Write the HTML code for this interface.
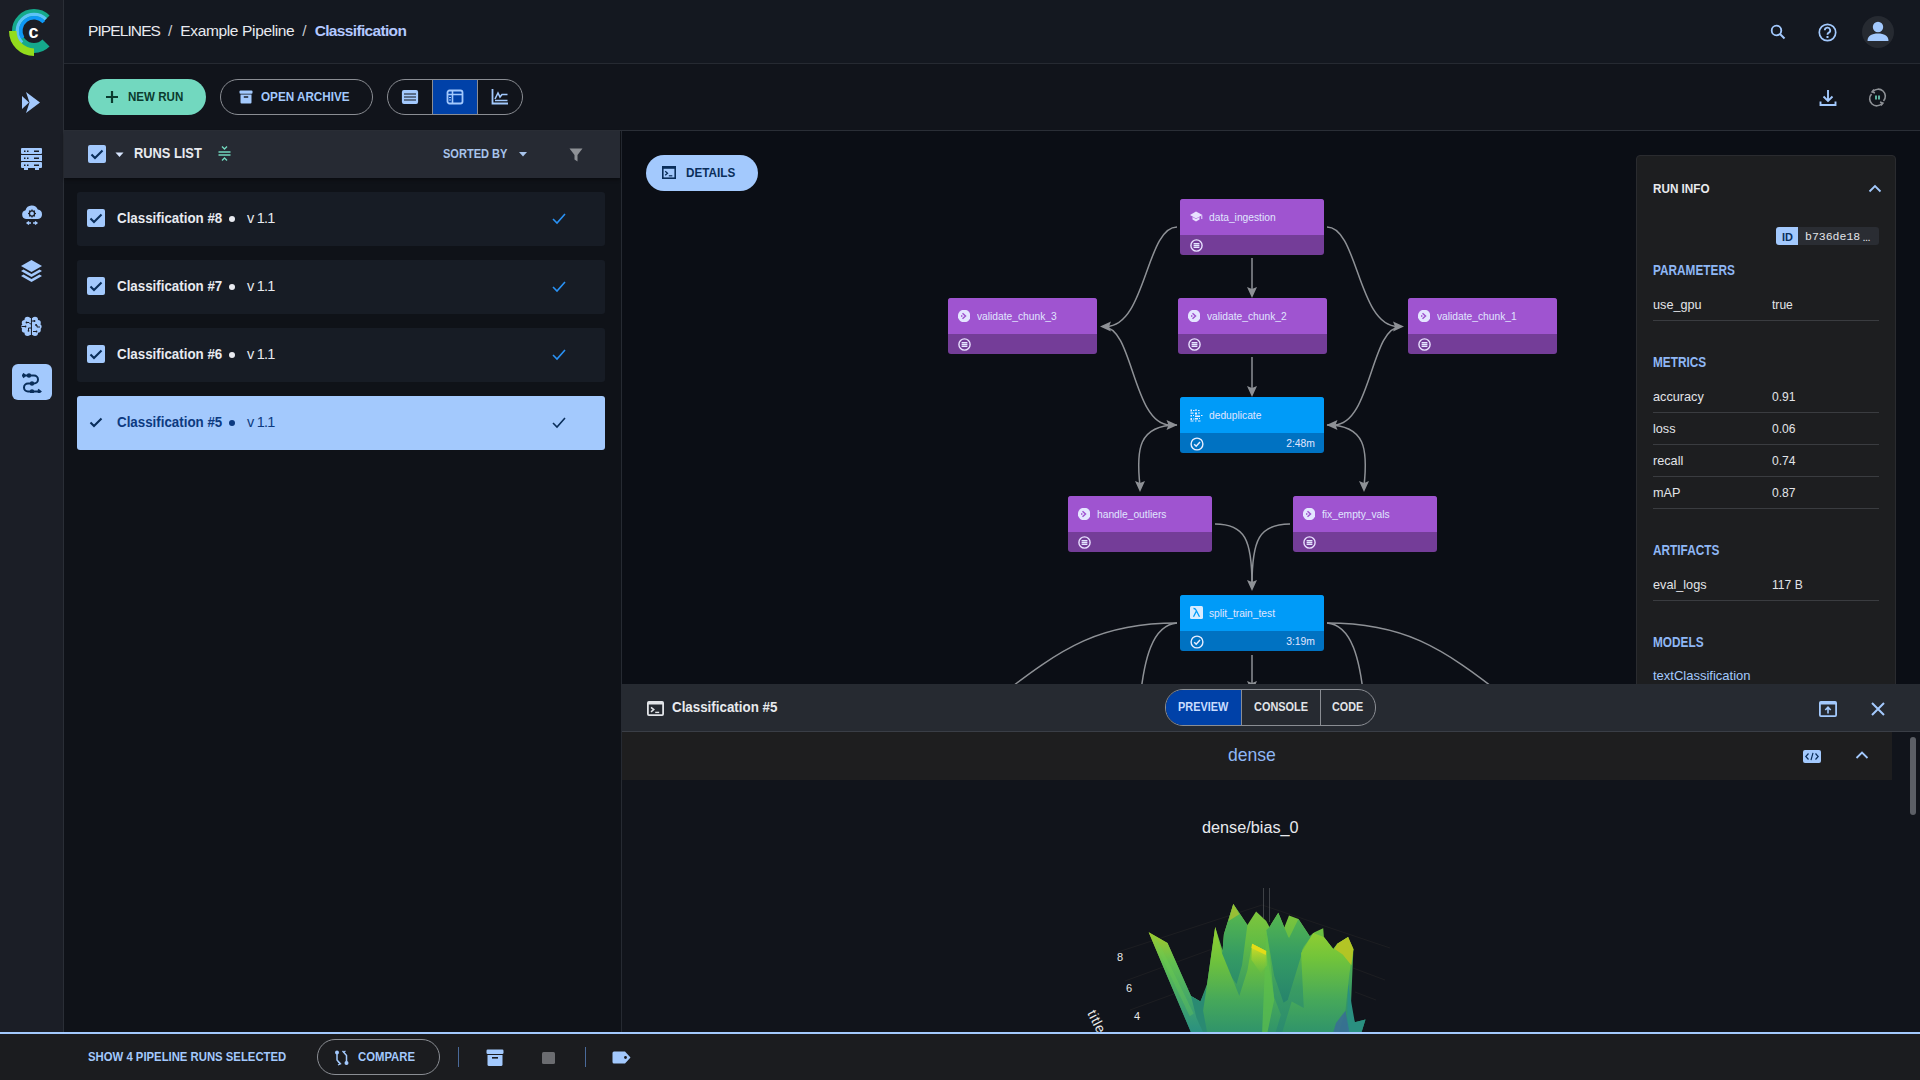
<!DOCTYPE html>
<html><head><meta charset="utf-8">
<style>
*{box-sizing:border-box;margin:0;padding:0}
html,body{width:1920px;height:1080px;overflow:hidden;background:#11141b;font-family:"Liberation Sans",sans-serif;color:#e6e8ee}
.a{position:absolute}
#sidebar{left:0;top:0;width:64px;height:1032px;background:#1b1e26;border-right:1px solid #2a2e36}
#header{left:64px;top:0;width:1856px;height:64px;background:#141820;border-bottom:1px solid #262a32}
#toolbar{left:64px;top:64px;width:1856px;height:67px;background:#11141b;border-bottom:1px solid #2a2e36}
#runs{left:64px;top:131px;width:558px;height:901px;background:#0f1218;border-right:1px solid #262a32}
#runshead{left:0;top:0;width:556px;height:47px;background:#262a33;box-shadow:0 2px 3px rgba(0,0,0,0.35)}
.card{position:absolute;left:13px;width:528px;height:54px;background:#171c25;border-radius:3px}
.card.sel{background:#a3c9fd}
#graph{left:622px;top:131px;width:1298px;height:553px;background:#0b0e15;overflow:hidden}
#bottom{left:622px;top:684px;width:1298px;height:348px;background:#11141b;overflow:hidden}
#footer{left:0;top:1032px;width:1920px;height:48px;background:#1b1c1f;border-top:2px solid #a3c9fd}
.btn{position:absolute;border-radius:18px;height:36px}
</style></head>
<body>
<div id="sidebar" class="a">
  <svg class="a" style="left:0;top:0" width="63" height="64" viewBox="0 0 63 64">
    <!-- logo --><path d="M46.02 18.98 A17 17 0 1 0 46.02 43.02" fill="none" stroke="#15a98b" stroke-width="10"/><path d="M45.77 19.23 A16.65 16.65 0 0 0 22.02 42.57" fill="none" stroke="#5cc3f5" stroke-width="3.4"/><path d="M43.85 22.13 A13.25 13.25 0 0 0 22.76 38.02" fill="none" stroke="#0e98f6" stroke-width="3.6"/><path d="M12.75 31.00 A21.25 21.25 0 0 0 34.00 52.25" fill="none" stroke="#93dc1c" stroke-width="7.5"/><text x="33.6" y="37.5" font-family="Liberation Sans" font-weight="bold" font-size="18" fill="#fff" text-anchor="middle">c</text></svg>
  <svg class="a" style="left:21px;top:91px" width="21" height="23" viewBox="0 0 21 23"><path d="M5 1 L19 11.5 L5 22 L8.5 11.5 Z" fill="#a3c9fd"/><path d="M1 5 L8 11.5 L1 18 Z" fill="#a3c9fd"/></svg>
  <svg class="a" style="left:21px;top:148px" width="21" height="22" viewBox="0 0 21 22">
    <rect x="0" y="0" width="21" height="6" rx="1" fill="#a3c9fd"/><rect x="0" y="7" width="21" height="6" fill="#a3c9fd"/><rect x="0" y="14" width="21" height="6" rx="1" fill="#a3c9fd"/><rect x="3" y="20" width="4" height="2" fill="#a3c9fd"/><rect x="14" y="20" width="4" height="2" fill="#a3c9fd"/>
    <g fill="#1b1e26"><rect x="3" y="2.5" width="1.5" height="1.5"/><rect x="6" y="2.5" width="1.5" height="1.5"/><rect x="13" y="2.5" width="5" height="1.5"/><rect x="3" y="9.5" width="1.5" height="1.5"/><rect x="6" y="9.5" width="1.5" height="1.5"/><rect x="13" y="9.5" width="5" height="1.5"/><rect x="3" y="16.5" width="1.5" height="1.5"/><rect x="6" y="16.5" width="1.5" height="1.5"/><rect x="13" y="16.5" width="5" height="1.5"/></g>
  </svg>
  <svg class="a" style="left:21px;top:204px" width="22" height="22" viewBox="0 0 22 22">
    <path d="M5 15 A4.5 4.5 0 0 1 4.5 6.2 A6.5 6.5 0 0 1 16.8 5.5 A4.8 4.8 0 0 1 17 15 Z" fill="#a3c9fd"/>
    <circle cx="11" cy="9.5" r="2.6" fill="none" stroke="#1b1e26" stroke-width="1.4"/>
    <path d="M11 5.5v1.6M11 11.9v1.6M7 9.5h1.6M13.4 9.5H15M8.2 6.7l1.1 1.1M12.7 11.2l1.1 1.1M8.2 12.3l1.1-1.1M12.7 7.8l1.1-1.1" stroke="#1b1e26" stroke-width="1.2"/>
    <path d="M6 19h4M8 17.5l-2 1.5 2 1.5M12 19h4M14 17.5l2 1.5-2 1.5" stroke="#a3c9fd" stroke-width="1.3" fill="none"/>
  </svg>
  <svg class="a" style="left:21px;top:260px" width="21" height="22" viewBox="0 0 21 22">
    <path d="M10.5 0 L21 6 L10.5 12 L0 6 Z" fill="#a3c9fd"/>
    <path d="M2.5 9.5 L0 11 L10.5 17 L21 11 L18.5 9.5 L10.5 14 Z" fill="#a3c9fd"/>
    <path d="M2.5 14.5 L0 16 L10.5 22 L21 16 L18.5 14.5 L10.5 19 Z" fill="#a3c9fd"/>
  </svg>
  <svg class="a" style="left:21px;top:316px" width="21" height="21" viewBox="0 0 21 21"><g fill="#a3c9fd">
<circle cx="6.5" cy="3.8" r="3"/><circle cx="3.6" cy="6.8" r="2.8"/><circle cx="2.8" cy="10.5" r="2.6"/><circle cx="3.6" cy="14" r="2.8"/><circle cx="6.5" cy="17" r="3"/><rect x="5" y="2" width="5" height="17"/>
<circle cx="14" cy="3.8" r="3"/><circle cx="17" cy="6.8" r="2.8"/><circle cx="18" cy="10.5" r="2.6"/><circle cx="17" cy="14" r="2.8"/><circle cx="14" cy="17" r="3"/><rect x="10.8" y="2" width="5" height="17"/></g>
<path d="M10.4 1v19" stroke="#1b1e26" stroke-width="0.8"/>
<g stroke="#1b1e26" stroke-width="1" fill="none"><path d="M0.5 10.5h3.5M5.5 6.5l2.5 0 1.5 1.5h1M7.5 14.5v-2.5h3M13 5h-2.5M15 9h1v2h3M12 15.5h3"/></g>
<g fill="#1b1e26"><circle cx="4.5" cy="10.5" r="0.9"/><circle cx="5.5" cy="6.5" r="0.9"/><circle cx="7.5" cy="14.8" r="0.9"/><circle cx="13.5" cy="5" r="0.9"/><circle cx="15" cy="9" r="0.9"/><circle cx="15.5" cy="15.5" r="0.9"/></g></svg>
  <div class="a" style="left:12px;top:364px;width:40px;height:36px;background:#a3c9fd;border-radius:6px"></div>
  <svg class="a" style="left:21px;top:373px" width="21" height="20" viewBox="0 0 21 20">
    <path d="M1 2.5 H13 A4 4 0 0 1 13 10.5 H7 A4 4 0 0 0 7 18.5 H19" fill="none" stroke="#0a2e5a" stroke-width="2"/>
    <path d="M2 0.5 L4 2.5 L2 4.5M17 16.5 L19.5 18.5 L17 20.5" fill="none" stroke="#0a2e5a" stroke-width="1.8"/>
    <circle cx="8" cy="2.5" r="2.2" fill="#0a2e5a"/><circle cx="11" cy="10.5" r="2.2" fill="#0a2e5a"/><circle cx="11" cy="18.5" r="2.2" fill="#0a2e5a"/>
  </svg>
</div>
<div id="header" class="a">
  <div class="a" style="left:24px;top:21px;font-size:15.5px;line-height:19px;white-space:nowrap;color:#e8eaf0" id="bc"><span id="bc1" style="letter-spacing:-0.9px">PIPELINES</span><span style="margin:0 8px 0 8px;color:#c8cad0">/</span><span id="bc2" style="letter-spacing:-0.36px">Example Pipeline</span><span style="margin:0 8px 0 8px;color:#c8cad0">/</span><span id="bc3" style="color:#b3c8ff;font-weight:bold;letter-spacing:-0.66px">Classification</span></div>
  <svg class="a" style="left:1706px;top:24px" width="16" height="16" viewBox="0 0 16 16"><circle cx="6.5" cy="6.5" r="4.8" fill="none" stroke="#a3c9fd" stroke-width="1.8"/><path d="M10 10 L14.5 14.5" stroke="#a3c9fd" stroke-width="2"/></svg>
  <svg class="a" style="left:1754px;top:23px" width="19" height="19" viewBox="0 0 19 19"><circle cx="9.5" cy="9.5" r="8.2" fill="none" stroke="#a3c9fd" stroke-width="1.7"/><path d="M6.8 7.3 A2.7 2.7 0 1 1 10.5 9.8 C9.6 10.3 9.5 10.8 9.5 11.8" fill="none" stroke="#a3c9fd" stroke-width="1.8"/><rect x="8.5" y="13" width="2" height="2" fill="#a3c9fd"/></svg>
  <div class="a" style="left:1798px;top:16px;width:32px;height:32px;border-radius:50%;background:#262a31"></div>
  <svg class="a" style="left:1802px;top:20px" width="24" height="24" viewBox="0 0 24 24"><circle cx="12" cy="7" r="5.2" fill="#a3c9fd"/><path d="M1.5 21 C1.5 15.5 6 13.5 12 13.5 C18 13.5 22.5 15.5 22.5 21 Z" fill="#a3c9fd"/></svg>
</div>
<div id="toolbar" class="a">
  <div class="btn" style="left:24px;top:15px;width:118px;height:36px;background:#72d8bf"></div>
  <svg class="a" style="left:41px;top:26px" width="14" height="14" viewBox="0 0 14 14"><path d="M7 1v12M1 7h12" stroke="#0b3b2e" stroke-width="2.2"/></svg>
  <div class="a" id="tb_new" style="left:64px;top:25px;font-size:13px;line-height:15px;font-weight:bold;color:#0b3b2e;transform-origin:0 50%;transform:scaleX(0.89)">NEW RUN</div>
  <div class="btn" style="left:156px;top:15px;width:153px;height:36px;border:1px solid #8a8d93"></div>
  <svg class="a" style="left:175px;top:26px" width="14" height="14" viewBox="0 0 14 14"><rect x="0.5" y="0.5" width="13" height="3.2" rx="1" fill="#a3c9fd"/><path d="M1.5 4.5h11v8a1 1 0 0 1-1 1h-9a1 1 0 0 1-1-1z" fill="#a3c9fd"/><rect x="4.8" y="6.3" width="4.4" height="1.4" fill="#11141b"/></svg>
  <div class="a" id="tb_arch" style="left:197px;top:25px;font-size:13px;line-height:15px;font-weight:bold;color:#a3c9fd;transform-origin:0 50%;transform:scaleX(0.9)">OPEN ARCHIVE</div>
  <div class="btn" style="left:323px;top:15px;width:136px;height:36px;border:1px solid #8a8d93;overflow:hidden">
    <div class="a" style="left:44px;top:0;width:46px;height:34px;background:#0041a8;border-left:1px solid #8a8d93;border-right:1px solid #8a8d93"></div>
  </div>
  <svg class="a" style="left:337px;top:25px" width="18" height="16" viewBox="0 0 18 16"><rect x="0.9" y="1" width="16.2" height="14" rx="2" fill="#a3c9fd"/><path d="M3 5h12M3 8h12M3 11h12" stroke="#11141b" stroke-width="1.2"/></svg>
  <svg class="a" style="left:382px;top:25px" width="18" height="16" viewBox="0 0 18 16"><rect x="1.5" y="1.5" width="15" height="13" rx="2" fill="none" stroke="#a3c9fd" stroke-width="1.8"/><path d="M6.5 2v12M2 5.5h15" stroke="#a3c9fd" stroke-width="1.6"/><path d="M3 8.5h2M3 11h2" stroke="#a3c9fd" stroke-width="1.2"/></svg>
  <svg class="a" style="left:427px;top:24px" width="18" height="17" viewBox="0 0 18 17"><path d="M1.5 1v14.5H17" fill="none" stroke="#a3c9fd" stroke-width="1.8"/><path d="M4 11 L7 5 L9 9 L11 6.5 L16.5 6.5" fill="none" stroke="#a3c9fd" stroke-width="1.6"/><path d="M4 12.5h12.5" stroke="#a3c9fd" stroke-width="1.5"/></svg>
  <svg class="a" style="left:1755px;top:25px" width="18" height="18" viewBox="0 0 18 18"><path d="M9 1v11M4.5 7.5 L9 12 L13.5 7.5" fill="none" stroke="#a3c9fd" stroke-width="1.9"/><path d="M1.5 12.5v3.5h15v-3.5" fill="none" stroke="#a3c9fd" stroke-width="1.9"/></svg>
  <svg class="a" style="left:1804px;top:24px;transform:scaleX(-1)" width="19" height="19" viewBox="0 0 19 19"><path d="M3.5 13 A7 7 0 0 1 14 3.5" fill="none" stroke="#8e9196" stroke-width="1.6"/><path d="M15.5 6 A7 7 0 0 1 5 15.5" fill="none" stroke="#8e9196" stroke-width="1.6"/><path d="M13 1.5 L15 4 L12 5" fill="none" stroke="#8e9196" stroke-width="1.5"/><path d="M6 17.5 L4 15 L7 14" fill="none" stroke="#8e9196" stroke-width="1.5"/><path d="M8 7.5v4M11 7.5v4" stroke="#72d8bf" stroke-width="1.6"/></svg>
</div>
<div id="runs" class="a">
  <div id="runshead" class="a">
    <div class="a" style="left:24px;top:14px;width:18px;height:18px;border-radius:2px;background:#a3c9fd"></div><svg class="a" style="left:24px;top:14px" width="18" height="18" viewBox="0 0 18 18"><path d="M3.5 9.5 L7 13 L14.5 5.5" fill="none" stroke="#0a2e5a" stroke-width="2.1"/></svg>
    <svg class="a" style="left:51px;top:21px" width="9" height="6" viewBox="0 0 9 6"><path d="M0.5 0.5 L8.5 0.5 L4.5 5 Z" fill="#d8e6ff"/></svg>
    <div class="a" id="rl" style="left:70px;top:13px;font-size:15px;line-height:18px;font-weight:bold;color:#e8eaf0;white-space:nowrap;transform-origin:0 50%;transform:scaleX(0.856)">RUNS LIST</div>
    <svg class="a" style="left:154px;top:15px" width="13" height="15" viewBox="0 0 13 15"><path d="M0.5 6h12M0.5 9h12" stroke="#72d8bf" stroke-width="1.4"/><path d="M4 0.5 L6.5 3 L9 0.5M4 14.5 L6.5 12 L9 14.5" fill="none" stroke="#72d8bf" stroke-width="1.4"/></svg>
    <div class="a" id="sb" style="left:379px;top:16px;font-size:12px;line-height:14px;font-weight:bold;color:#a8c4ec;white-space:nowrap;transform-origin:0 50%;transform:scaleX(0.92)">SORTED BY</div>
    <svg class="a" style="left:455px;top:21px" width="8" height="5" viewBox="0 0 8 5"><path d="M0 0 L8 0 L4 4.5 Z" fill="#a8c4ec"/></svg>
    <svg class="a" style="left:505px;top:17px" width="14" height="14" viewBox="0 0 14 14"><path d="M0.5 0.5 H13.5 L8.5 7 V13.5 L5.5 11.5 V7 Z" fill="#8e9196"/></svg>
  </div>
  <div class="card" style="top:61px"><div class="a" style="left:10px;top:17px;width:18px;height:18px;border-radius:2px;background:#a3c9fd"></div><svg class="a" style="left:10px;top:17px" width="18" height="18" viewBox="0 0 18 18"><path d="M3.5 9.5 L7 13 L14.5 5.5" fill="none" stroke="#0a2e5a" stroke-width="2.1"/></svg>
    <div class="a rt" style="left:40px;top:18px;font-size:14.5px;line-height:17px;font-weight:bold;color:#e8eaf0;white-space:nowrap;transform-origin:0 50%;transform:scaleX(0.92)">Classification #8</div>
    <div class="a" style="left:152px;top:23.5px;width:6px;height:6px;border-radius:50%;background:#e8eaf0"></div>
    <div class="a rv" style="left:170px;top:18px;font-size:14.5px;line-height:17px;color:#e8eaf0;white-space:nowrap;letter-spacing:-0.75px">v 1.1</div>
    <svg class="a" style="left:475px;top:20px" width="14" height="13" viewBox="0 0 14 13"><path d="M1 7 L5 11 L13 2" fill="none" stroke="#2a92f5" stroke-width="1.6"/></svg>
  </div>
  <div class="card" style="top:129px"><div class="a" style="left:10px;top:17px;width:18px;height:18px;border-radius:2px;background:#a3c9fd"></div><svg class="a" style="left:10px;top:17px" width="18" height="18" viewBox="0 0 18 18"><path d="M3.5 9.5 L7 13 L14.5 5.5" fill="none" stroke="#0a2e5a" stroke-width="2.1"/></svg>
    <div class="a rt" style="left:40px;top:18px;font-size:14.5px;line-height:17px;font-weight:bold;color:#e8eaf0;white-space:nowrap;transform-origin:0 50%;transform:scaleX(0.92)">Classification #7</div>
    <div class="a" style="left:152px;top:23.5px;width:6px;height:6px;border-radius:50%;background:#e8eaf0"></div>
    <div class="a rv" style="left:170px;top:18px;font-size:14.5px;line-height:17px;color:#e8eaf0;white-space:nowrap;letter-spacing:-0.75px">v 1.1</div>
    <svg class="a" style="left:475px;top:20px" width="14" height="13" viewBox="0 0 14 13"><path d="M1 7 L5 11 L13 2" fill="none" stroke="#2a92f5" stroke-width="1.6"/></svg>
  </div>
  <div class="card" style="top:197px"><div class="a" style="left:10px;top:17px;width:18px;height:18px;border-radius:2px;background:#a3c9fd"></div><svg class="a" style="left:10px;top:17px" width="18" height="18" viewBox="0 0 18 18"><path d="M3.5 9.5 L7 13 L14.5 5.5" fill="none" stroke="#0a2e5a" stroke-width="2.1"/></svg>
    <div class="a rt" style="left:40px;top:18px;font-size:14.5px;line-height:17px;font-weight:bold;color:#e8eaf0;white-space:nowrap;transform-origin:0 50%;transform:scaleX(0.92)">Classification #6</div>
    <div class="a" style="left:152px;top:23.5px;width:6px;height:6px;border-radius:50%;background:#e8eaf0"></div>
    <div class="a rv" style="left:170px;top:18px;font-size:14.5px;line-height:17px;color:#e8eaf0;white-space:nowrap;letter-spacing:-0.75px">v 1.1</div>
    <svg class="a" style="left:475px;top:20px" width="14" height="13" viewBox="0 0 14 13"><path d="M1 7 L5 11 L13 2" fill="none" stroke="#2a92f5" stroke-width="1.6"/></svg>
  </div>
  <div class="card sel" style="top:265px"><svg class="a" style="left:10px;top:17px" width="18" height="18" viewBox="0 0 18 18"><path d="M3.5 9.5 L7 13 L14.5 5.5" fill="none" stroke="#0a2e5a" stroke-width="2.1"/></svg>
    <div class="a rt" style="left:40px;top:18px;font-size:14.5px;line-height:17px;font-weight:bold;color:#0c3a80;white-space:nowrap;transform-origin:0 50%;transform:scaleX(0.92)">Classification #5</div>
    <div class="a" style="left:152px;top:23.5px;width:6px;height:6px;border-radius:50%;background:#0c3a80"></div>
    <div class="a rv" style="left:170px;top:18px;font-size:14.5px;line-height:17px;color:#0c3a80;white-space:nowrap;letter-spacing:-0.75px">v 1.1</div>
    <svg class="a" style="left:475px;top:20px" width="14" height="13" viewBox="0 0 14 13"><path d="M1 7 L5 11 L13 2" fill="none" stroke="#0a2e5a" stroke-width="1.6"/></svg>
  </div>
</div>
<div id="graph" class="a"></div>
<div id="gcontent"><svg class="a" style="left:0;top:0" width="1920" height="700" viewBox="0 0 1920 700"><g fill="none" stroke="#8e9196" stroke-width="1.5"><path d="M1252 258 V292"/><path d="M1252 357 V391"/><path d="M1252 655 V700"/><path d="M1177 227 C1146 227 1146 326.5 1106 326.5"/><path d="M1327 227 C1358 227 1358 326.5 1398 326.5"/><path d="M1104 327 C1133 327 1133 425 1170 425"/><path d="M1400 327 C1371 327 1371 425 1334 425"/><path d="M1177 425 C1138 425 1136 450 1140 486"/><path d="M1327 425 C1366 425 1368 450 1364 486"/><path d="M1215 524 C1245 524 1252 540 1252 585"/><path d="M1290 524 C1259 524 1252 540 1252 585"/><path d="M1177 623 C1102 623 1064 645 995 700"/><path d="M1177 623 C1152 625 1144 660 1140 700"/><path d="M1327 623 C1352 625 1360 660 1364 700"/><path d="M1327 623 C1402 623 1440 645 1509 700"/></g><path d="M1252.0 298.0 L1247.0 287.0 L1252.0 289.0 L1257.0 287.0 Z" fill="#8e9196"/><path d="M1252.0 397.0 L1247.0 386.0 L1252.0 388.0 L1257.0 386.0 Z" fill="#8e9196"/><path d="M1100.0 326.5 L1111.0 321.5 L1109.0 326.5 L1111.0 331.5 Z" fill="#8e9196"/><path d="M1404.0 326.5 L1393.0 321.5 L1395.0 326.5 L1393.0 331.5 Z" fill="#8e9196"/><path d="M1177.5 425.0 L1166.5 420.0 L1168.5 425.0 L1166.5 430.0 Z" fill="#8e9196"/><path d="M1326.5 425.0 L1337.5 420.0 L1335.5 425.0 L1337.5 430.0 Z" fill="#8e9196"/><path d="M1140.0 492.0 L1135.0 481.0 L1140.0 483.0 L1145.0 481.0 Z" fill="#8e9196"/><path d="M1364.0 492.0 L1359.0 481.0 L1364.0 483.0 L1369.0 481.0 Z" fill="#8e9196"/><path d="M1252.0 591.0 L1247.0 580.0 L1252.0 582.0 L1257.0 580.0 Z" fill="#8e9196"/><path d="M1252.0 692.0 L1247.0 681.0 L1252.0 683.0 L1257.0 681.0 Z" fill="#8e9196"/></svg><div class="a" style="left:1180px;top:199px;width:144px;height:56px;border-radius:3px;overflow:hidden;background:#743d98"><div class="a" style="left:0;top:0;width:144px;height:36px;background:#9f54d0"></div></div><svg class="a" style="left:1190px;top:211px" width="13" height="11" viewBox="0 0 13 11"><path d="M6 0.5 L12.5 4 L6 7.5 L0 4 Z" fill="#e8e0ff"/><path d="M2.5 6 V8.5 L6 10.5 L9.5 8.5 V6 L6 8 Z" fill="#e8e0ff"/><path d="M11.8 4.5 V8" stroke="#e8e0ff" stroke-width="1"/></svg><div class="a nn" style="left:1209px;top:210px;font-size:11.5px;line-height:14px;color:#e0e6ff;white-space:nowrap;transform-origin:0 50%;transform:scaleX(0.89)">data_ingestion</div><svg class="a" style="left:1190px;top:239px" width="13" height="13" viewBox="0 0 13 13"><circle cx="6.5" cy="6.5" r="5.6" fill="none" stroke="#e8e0ff" stroke-width="1.4"/><path d="M3.6 4.6h5.8M3.6 6.5h5.8M3.6 8.4h5.8" stroke="#e4e6ff" stroke-width="1.4"/></svg><div class="a" style="left:948px;top:298px;width:149px;height:56px;border-radius:3px;overflow:hidden;background:#743d98"><div class="a" style="left:0;top:0;width:149px;height:36px;background:#9f54d0"></div></div><svg class="a" style="left:958px;top:310px" width="12" height="12" viewBox="0 0 12 12"><circle cx="6.2" cy="6" r="6.3" fill="#e4e6ff"/><path d="M4.5 3.2 L7.5 6 L4.5 8.8" fill="none" stroke="#9f54d0" stroke-width="1.5"/><rect x="3" y="5.2" width="1.4" height="1.6" fill="#9f54d0"/></svg><div class="a nn" style="left:977px;top:309px;font-size:11.5px;line-height:14px;color:#e0e6ff;white-space:nowrap;transform-origin:0 50%;transform:scaleX(0.89)">validate_chunk_3</div><svg class="a" style="left:958px;top:338px" width="13" height="13" viewBox="0 0 13 13"><circle cx="6.5" cy="6.5" r="5.6" fill="none" stroke="#e8e0ff" stroke-width="1.4"/><path d="M3.6 4.6h5.8M3.6 6.5h5.8M3.6 8.4h5.8" stroke="#e4e6ff" stroke-width="1.4"/></svg><div class="a" style="left:1178px;top:298px;width:149px;height:56px;border-radius:3px;overflow:hidden;background:#743d98"><div class="a" style="left:0;top:0;width:149px;height:36px;background:#9f54d0"></div></div><svg class="a" style="left:1188px;top:310px" width="12" height="12" viewBox="0 0 12 12"><circle cx="6.2" cy="6" r="6.3" fill="#e4e6ff"/><path d="M4.5 3.2 L7.5 6 L4.5 8.8" fill="none" stroke="#9f54d0" stroke-width="1.5"/><rect x="3" y="5.2" width="1.4" height="1.6" fill="#9f54d0"/></svg><div class="a nn" style="left:1207px;top:309px;font-size:11.5px;line-height:14px;color:#e0e6ff;white-space:nowrap;transform-origin:0 50%;transform:scaleX(0.89)">validate_chunk_2</div><svg class="a" style="left:1188px;top:338px" width="13" height="13" viewBox="0 0 13 13"><circle cx="6.5" cy="6.5" r="5.6" fill="none" stroke="#e8e0ff" stroke-width="1.4"/><path d="M3.6 4.6h5.8M3.6 6.5h5.8M3.6 8.4h5.8" stroke="#e4e6ff" stroke-width="1.4"/></svg><div class="a" style="left:1408px;top:298px;width:149px;height:56px;border-radius:3px;overflow:hidden;background:#743d98"><div class="a" style="left:0;top:0;width:149px;height:36px;background:#9f54d0"></div></div><svg class="a" style="left:1418px;top:310px" width="12" height="12" viewBox="0 0 12 12"><circle cx="6.2" cy="6" r="6.3" fill="#e4e6ff"/><path d="M4.5 3.2 L7.5 6 L4.5 8.8" fill="none" stroke="#9f54d0" stroke-width="1.5"/><rect x="3" y="5.2" width="1.4" height="1.6" fill="#9f54d0"/></svg><div class="a nn" style="left:1437px;top:309px;font-size:11.5px;line-height:14px;color:#e0e6ff;white-space:nowrap;transform-origin:0 50%;transform:scaleX(0.89)">validate_chunk_1</div><svg class="a" style="left:1418px;top:338px" width="13" height="13" viewBox="0 0 13 13"><circle cx="6.5" cy="6.5" r="5.6" fill="none" stroke="#e8e0ff" stroke-width="1.4"/><path d="M3.6 4.6h5.8M3.6 6.5h5.8M3.6 8.4h5.8" stroke="#e4e6ff" stroke-width="1.4"/></svg><div class="a" style="left:1180px;top:397px;width:144px;height:56px;border-radius:3px;overflow:hidden;background:#0072c2"><div class="a" style="left:0;top:0;width:144px;height:36px;background:#009bf8"></div></div><svg class="a" style="left:1190px;top:409px" width="13" height="13" viewBox="0 0 13 13"><g fill="#e8eeff"><rect x="0.5" y="0.5" width="1.5" height="2"/><rect x="3" y="1" width="1.5" height="1"/><rect x="5" y="0.5" width="2" height="1.2"/><rect x="8" y="1" width="1.5" height="1"/><rect x="0.5" y="3.5" width="3" height="1.2"/><rect x="5" y="3.5" width="2" height="2"/><rect x="8" y="3.5" width="2" height="1"/><rect x="0.5" y="6" width="1.5" height="1.5"/><rect x="3" y="6" width="1" height="1"/><rect x="5" y="6.5" width="5" height="1.5"/><rect x="11" y="6" width="1.5" height="1"/><rect x="0.5" y="9" width="1.5" height="2"/><rect x="3" y="9.5" width="1.5" height="1"/><rect x="5" y="9" width="3" height="1.5"/><rect x="9" y="9" width="1" height="1"/><rect x="0.5" y="11.5" width="3" height="1"/><rect x="5" y="11.5" width="1.5" height="1"/><rect x="8" y="11.5" width="2.5" height="1"/></g></svg><div class="a nn" style="left:1209px;top:408px;font-size:11.5px;line-height:14px;color:#e0e6ff;white-space:nowrap;transform-origin:0 50%;transform:scaleX(0.89)">deduplicate</div><svg class="a" style="left:1190px;top:437px" width="14" height="14" viewBox="0 0 14 14"><circle cx="7" cy="7" r="5.9" fill="none" stroke="#e8eeff" stroke-width="1.4"/><path d="M4.2 7.2 L6.2 9.2 L10 5" fill="none" stroke="#e8eeff" stroke-width="1.5"/></svg><div class="a nd" style="right:605px;top:436px;font-size:11.5px;line-height:14px;color:#e0e6ff;white-space:nowrap;transform-origin:100% 50%;transform:scaleX(0.9)">2:48m</div><div class="a" style="left:1068px;top:496px;width:144px;height:56px;border-radius:3px;overflow:hidden;background:#743d98"><div class="a" style="left:0;top:0;width:144px;height:36px;background:#9f54d0"></div></div><svg class="a" style="left:1078px;top:508px" width="12" height="12" viewBox="0 0 12 12"><circle cx="6.2" cy="6" r="6.3" fill="#e4e6ff"/><path d="M4.5 3.2 L7.5 6 L4.5 8.8" fill="none" stroke="#9f54d0" stroke-width="1.5"/><rect x="3" y="5.2" width="1.4" height="1.6" fill="#9f54d0"/></svg><div class="a nn" style="left:1097px;top:507px;font-size:11.5px;line-height:14px;color:#e0e6ff;white-space:nowrap;transform-origin:0 50%;transform:scaleX(0.89)">handle_outliers</div><svg class="a" style="left:1078px;top:536px" width="13" height="13" viewBox="0 0 13 13"><circle cx="6.5" cy="6.5" r="5.6" fill="none" stroke="#e8e0ff" stroke-width="1.4"/><path d="M3.6 4.6h5.8M3.6 6.5h5.8M3.6 8.4h5.8" stroke="#e4e6ff" stroke-width="1.4"/></svg><div class="a" style="left:1293px;top:496px;width:144px;height:56px;border-radius:3px;overflow:hidden;background:#743d98"><div class="a" style="left:0;top:0;width:144px;height:36px;background:#9f54d0"></div></div><svg class="a" style="left:1303px;top:508px" width="12" height="12" viewBox="0 0 12 12"><circle cx="6.2" cy="6" r="6.3" fill="#e4e6ff"/><path d="M4.5 3.2 L7.5 6 L4.5 8.8" fill="none" stroke="#9f54d0" stroke-width="1.5"/><rect x="3" y="5.2" width="1.4" height="1.6" fill="#9f54d0"/></svg><div class="a nn" style="left:1322px;top:507px;font-size:11.5px;line-height:14px;color:#e0e6ff;white-space:nowrap;transform-origin:0 50%;transform:scaleX(0.89)">fix_empty_vals</div><svg class="a" style="left:1303px;top:536px" width="13" height="13" viewBox="0 0 13 13"><circle cx="6.5" cy="6.5" r="5.6" fill="none" stroke="#e8e0ff" stroke-width="1.4"/><path d="M3.6 4.6h5.8M3.6 6.5h5.8M3.6 8.4h5.8" stroke="#e4e6ff" stroke-width="1.4"/></svg><div class="a" style="left:1180px;top:595px;width:144px;height:56px;border-radius:3px;overflow:hidden;background:#0072c2"><div class="a" style="left:0;top:0;width:144px;height:36px;background:#009bf8"></div></div><svg class="a" style="left:1190px;top:606px" width="13" height="13" viewBox="0 0 13 13"><rect x="0" y="0" width="13" height="13" rx="1.5" fill="#d8ecff"/><path d="M3.5 2.5 C5 2.3 5.5 3 6 4 L9.5 10.8M6.3 5.2 L3.5 10.8" fill="none" stroke="#009bf8" stroke-width="1.3"/></svg><div class="a nn" style="left:1209px;top:606px;font-size:11.5px;line-height:14px;color:#e0e6ff;white-space:nowrap;transform-origin:0 50%;transform:scaleX(0.89)">split_train_test</div><svg class="a" style="left:1190px;top:635px" width="14" height="14" viewBox="0 0 14 14"><circle cx="7" cy="7" r="5.9" fill="none" stroke="#e8eeff" stroke-width="1.4"/><path d="M4.2 7.2 L6.2 9.2 L10 5" fill="none" stroke="#e8eeff" stroke-width="1.5"/></svg><div class="a nd" style="right:605px;top:634px;font-size:11.5px;line-height:14px;color:#e0e6ff;white-space:nowrap;transform-origin:100% 50%;transform:scaleX(0.9)">3:19m</div><div class="btn" style="left:646px;top:155px;width:112px;height:36px;background:#a3c9fd"></div>
<svg class="a" style="left:662px;top:166px" width="14" height="13" viewBox="0 0 14 13"><rect x="0.8" y="0.8" width="12.4" height="11.4" fill="none" stroke="#0a2e5a" stroke-width="1.6"/><rect x="0.8" y="0.8" width="12.4" height="2" fill="#0a2e5a"/><path d="M3.2 5.2 L5.5 7.2 L3.2 9.2" fill="none" stroke="#0a2e5a" stroke-width="1.3"/><path d="M6.8 9.8h3.5" stroke="#0a2e5a" stroke-width="1.2"/></svg>
<div class="a" id="det" style="left:686px;top:165px;font-size:13px;line-height:15px;font-weight:bold;color:#0a2e5a;transform-origin:0 50%;transform:scaleX(0.9)">DETAILS</div><div class="a" style="left:1636px;top:155px;width:260px;height:560px;background:#1d1e20;border:1px solid #2a2b2f;border-radius:4px"></div><div class="a" id="rinfo" style="left:1653px;top:181px;font-size:13.5px;line-height:16px;font-weight:bold;color:#e8eaee;white-space:nowrap;transform-origin:0 50%;transform:scaleX(0.867)">RUN INFO</div><svg class="a" style="left:1868px;top:183px" width="14" height="10" viewBox="0 0 14 10"><path d="M1.5 8.5 L7 3 L12.5 8.5" fill="none" stroke="#a3c9fd" stroke-width="1.8"/></svg><div class="a" style="left:1776px;top:227px;width:103px;height:18px;background:#2a2d33;border-radius:3px"></div><div class="a" style="left:1776px;top:227px;width:22px;height:18px;background:#a3c9fd;border-radius:3px 0 0 3px"></div><div class="a" style="left:1781.5px;top:229.5px;font-size:11.5px;line-height:14px;font-weight:bold;color:#0a2e5a;transform-origin:0 50%;transform:scaleX(0.95)">ID</div><div class="a" id="rid" style="left:1805px;top:230px;font-family:'Liberation Mono',monospace;font-size:11.5px;line-height:14px;color:#e2e4e8;white-space:nowrap">b736de18</div><div class="a" style="left:1862.5px;top:230px;font-size:11px;line-height:14px;color:#e2e4e8;letter-spacing:-0.6px">...</div><div class="a rs" style="left:1653px;top:262px;font-size:14px;line-height:16px;font-weight:bold;color:#8fb7f5;white-space:nowrap;transform-origin:0 50%;transform:scaleX(0.844)">PARAMETERS</div><div class="a ri" style="left:1653px;top:297px;font-size:13px;line-height:16px;color:#e2e4e8;white-space:nowrap;transform-origin:0 50%;transform:scaleX(0.975)">use_gpu</div><div class="a ri" style="left:1772px;top:297px;font-size:13px;line-height:16px;color:#e2e4e8;white-space:nowrap;transform-origin:0 50%;transform:scaleX(0.93)">true</div><div class="a" style="left:1653px;top:320px;width:226px;height:1px;background:#3a3c40"></div><div class="a rs" style="left:1653px;top:354px;font-size:14px;line-height:16px;font-weight:bold;color:#8fb7f5;white-space:nowrap;transform-origin:0 50%;transform:scaleX(0.844)">METRICS</div><div class="a ri" style="left:1653px;top:389px;font-size:13px;line-height:16px;color:#e2e4e8;white-space:nowrap;transform-origin:0 50%;transform:scaleX(0.975)">accuracy</div><div class="a ri" style="left:1772px;top:389px;font-size:13px;line-height:16px;color:#e2e4e8;white-space:nowrap;transform-origin:0 50%;transform:scaleX(0.93)">0.91</div><div class="a" style="left:1653px;top:412px;width:226px;height:1px;background:#3a3c40"></div><div class="a ri" style="left:1653px;top:421px;font-size:13px;line-height:16px;color:#e2e4e8;white-space:nowrap;transform-origin:0 50%;transform:scaleX(0.975)">loss</div><div class="a ri" style="left:1772px;top:421px;font-size:13px;line-height:16px;color:#e2e4e8;white-space:nowrap;transform-origin:0 50%;transform:scaleX(0.93)">0.06</div><div class="a" style="left:1653px;top:444px;width:226px;height:1px;background:#3a3c40"></div><div class="a ri" style="left:1653px;top:453px;font-size:13px;line-height:16px;color:#e2e4e8;white-space:nowrap;transform-origin:0 50%;transform:scaleX(0.975)">recall</div><div class="a ri" style="left:1772px;top:453px;font-size:13px;line-height:16px;color:#e2e4e8;white-space:nowrap;transform-origin:0 50%;transform:scaleX(0.93)">0.74</div><div class="a" style="left:1653px;top:476px;width:226px;height:1px;background:#3a3c40"></div><div class="a ri" style="left:1653px;top:485px;font-size:13px;line-height:16px;color:#e2e4e8;white-space:nowrap;transform-origin:0 50%;transform:scaleX(0.975)">mAP</div><div class="a ri" style="left:1772px;top:485px;font-size:13px;line-height:16px;color:#e2e4e8;white-space:nowrap;transform-origin:0 50%;transform:scaleX(0.93)">0.87</div><div class="a" style="left:1653px;top:508px;width:226px;height:1px;background:#3a3c40"></div><div class="a rs" style="left:1653px;top:542px;font-size:14px;line-height:16px;font-weight:bold;color:#8fb7f5;white-space:nowrap;transform-origin:0 50%;transform:scaleX(0.844)">ARTIFACTS</div><div class="a ri" style="left:1653px;top:577px;font-size:13px;line-height:16px;color:#e2e4e8;white-space:nowrap;transform-origin:0 50%;transform:scaleX(0.975)">eval_logs</div><div class="a ri" style="left:1772px;top:577px;font-size:13px;line-height:16px;color:#e2e4e8;white-space:nowrap;transform-origin:0 50%;transform:scaleX(0.93)">117 B</div><div class="a" style="left:1653px;top:600px;width:226px;height:1px;background:#3a3c40"></div><div class="a rs" style="left:1653px;top:634px;font-size:14px;line-height:16px;font-weight:bold;color:#8fb7f5;white-space:nowrap;transform-origin:0 50%;transform:scaleX(0.844)">MODELS</div><div class="a" style="left:1653px;top:668px;font-size:13px;line-height:16px;color:#a3c9fd;white-space:nowrap;transform-origin:0 50%;transform:scaleX(1.0)">textClassification</div></div>
<div id="bottom" class="a">
  <div class="a" style="left:0;top:0;width:1298px;height:48px;background:#262a31;border-bottom:1px solid #3a3e46"></div>
  <svg class="a" style="left:25px;top:17px" width="17" height="15" viewBox="0 0 17 15"><rect x="0.9" y="0.9" width="15.2" height="13.2" rx="1" fill="none" stroke="#e2e4e8" stroke-width="1.8"/><rect x="0.9" y="0.9" width="15.2" height="2.6" fill="#e2e4e8"/><path d="M4 6.3 L6.8 8.6 L4 10.9" fill="none" stroke="#e2e4e8" stroke-width="1.5"/><path d="M8.2 11.4h4" stroke="#e2e4e8" stroke-width="1.4"/></svg>
  <div class="a" id="bt" style="left:50px;top:13.5px;font-size:15px;line-height:17px;font-weight:bold;color:#e8eaee;white-space:nowrap;transform-origin:0 50%;transform:scaleX(0.89)">Classification #5</div>
  <div class="btn" style="left:543px;top:5px;width:211px;height:37px;border:1px solid #8a8d93;overflow:hidden">
    <div class="a" style="left:0;top:0;width:76px;height:35px;background:#0041a8;border-right:1px solid #8a8d93"></div>
    <div class="a" style="left:154px;top:0;width:1px;height:35px;background:#8a8d93"></div>
  </div>
  <div class="a tb" style="left:556px;top:16px;font-size:12px;line-height:14px;font-weight:bold;color:#c9dcff;white-space:nowrap;transform-origin:0 50%;transform:scaleX(0.91)">PREVIEW</div>
  <div class="a tb" style="left:631.5px;top:16px;font-size:12px;line-height:14px;font-weight:bold;color:#e2e4e8;white-space:nowrap;transform-origin:0 50%;transform:scaleX(0.91)">CONSOLE</div>
  <div class="a tb" style="left:710px;top:16px;font-size:12px;line-height:14px;font-weight:bold;color:#e2e4e8;white-space:nowrap;transform-origin:0 50%;transform:scaleX(0.9)">CODE</div>
  <svg class="a" style="left:1197px;top:17px" width="18" height="16" viewBox="0 0 18 16"><rect x="0.9" y="0.9" width="16.2" height="14.2" rx="1" fill="none" stroke="#a3c9fd" stroke-width="1.8"/><rect x="0.9" y="0.9" width="16.2" height="2.6" fill="#a3c9fd"/><path d="M9 12.5 V6.5M6.3 9 L9 6.2 L11.7 9" fill="none" stroke="#a3c9fd" stroke-width="1.6"/></svg>
  <svg class="a" style="left:1249px;top:18px" width="14" height="14" viewBox="0 0 14 14"><path d="M1 1 L13 13M13 1 L1 13" stroke="#a3c9fd" stroke-width="2"/></svg>
  <div class="a" style="left:0;top:48px;width:1270px;height:48px;background:#1e1e1f"></div>
  <div class="a" id="dn" style="left:606px;top:60px;font-size:18.5px;line-height:21px;color:#8fb7f5;white-space:nowrap;transform-origin:0 50%;transform:scaleX(0.95)">dense</div>
  <div class="a" style="left:1181px;top:66px;width:18px;height:13px;background:#a3c9fd;border-radius:2px"></div>
  <svg class="a" style="left:1181px;top:66px" width="18" height="13" viewBox="0 0 18 13"><path d="M5.5 3.5 L2.8 6.5 L5.5 9.5M12.5 3.5 L15.2 6.5 L12.5 9.5M10 2.8 L8 10.2" fill="none" stroke="#0a2e5a" stroke-width="1.2"/></svg>
  <svg class="a" style="left:1233px;top:66px" width="14" height="10" viewBox="0 0 14 10"><path d="M1.5 8 L7 2.5 L12.5 8" fill="none" stroke="#a3c9fd" stroke-width="1.8"/></svg>
  <div class="a" style="left:1288px;top:53px;width:6px;height:78px;background:#5c5f66;border-radius:3px"></div>
  <div class="a" id="db" style="left:580px;top:135px;font-size:16px;line-height:18px;color:#e8eaee;white-space:nowrap;transform-origin:0 50%;transform:scaleX(1.015)">dense/bias_0</div>
  <svg class="a" style="left:0;top:0" width="1298" height="348" viewBox="0 0 1298 348">
<defs>
<linearGradient id="g1" gradientUnits="userSpaceOnUse" x1="0" y1="220" x2="0" y2="348"><stop offset="0" stop-color="#86c83a"/><stop offset="0.3" stop-color="#62bc44"/><stop offset="0.65" stop-color="#3a9c62"/><stop offset="1" stop-color="#2a8a70"/></linearGradient>
<linearGradient id="g2" gradientUnits="userSpaceOnUse" x1="0" y1="220" x2="0" y2="326"><stop offset="0" stop-color="#5cbc4a"/><stop offset="0.5" stop-color="#349a64"/><stop offset="1" stop-color="#24806e"/></linearGradient>
<linearGradient id="g3" gradientUnits="userSpaceOnUse" x1="0" y1="242" x2="0" y2="348"><stop offset="0" stop-color="#96d030"/><stop offset="0.3" stop-color="#72c43a"/><stop offset="0.7" stop-color="#46a85a"/><stop offset="1" stop-color="#30946a"/></linearGradient>
<linearGradient id="g4" gradientUnits="userSpaceOnUse" x1="0" y1="248" x2="0" y2="348"><stop offset="0" stop-color="#a8c82a"/><stop offset="0.3" stop-color="#62c050"/><stop offset="1" stop-color="#2a9080"/></linearGradient>
</defs>
<g stroke="#1d1e22" stroke-width="1" fill="none">
<path d="M496 268 L640 221"/><path d="M503 297 L593 264"/><path d="M508 326 L568 304"/>
<path d="M640 221 L768 264"/><path d="M731 284 L763 296"/><path d="M733 308 L754 316"/>
</g>
<path d="M641.5 204 V234M647.5 204 V238" stroke="#4a4d52" stroke-width="0.8"/>
<polygon points="526.7,248.3 545.5,259.0 569.0,312.0 578.4,317.4 585.1,300.0 593.2,242.9 600.6,266.4 601.9,250.3 611.3,220.1 625.4,240.9 634.1,227.5 644.2,236.9 647.5,242.9 656.3,228.8 662.3,243.6 667.0,231.5 676.4,234.9 687.8,252.3 692.5,248.3 701.2,244.3 701.9,253.0 711.3,265.1 715.3,259.7 726.1,253.0 726.7,263.7 731.4,265.1 728.7,326.8 732.8,338.2 743.5,335.5 739.5,348.3 569.0,348.3" fill="url(#g1)"/>
<polygon points="600.6,266.4 601.9,250.3 611.3,220.1 625.4,240.9 620.0,281.2 614.6,300.0 598.5,278.5" fill="url(#g2)"/>
<polygon points="644.2,246.3 647.5,242.9 656.3,228.8 666.3,253.0 680.4,267.7 665.7,316.1 661.6,318.8 652.2,291.9" fill="url(#g2)"/>
<polygon points="676.4,234.9 687.8,252.3 692.5,248.3 681.8,262.4 672.4,281.2 667.0,254.3" fill="url(#g2)"/>
<polygon points="526.7,248.3 545.5,259.0 569.0,312.0 578.4,317.4 587.8,332.2 582.4,348.3 569.0,348.3" fill="url(#g4)"/>
<polygon points="528.7,250.3 534.1,253.0 571.7,329.5 567.7,332.2" fill="#70d050" opacity="0.3"/>
<polygon points="726.1,300.0 732.8,338.2 743.5,335.5 739.5,348.3 724.7,348.3" fill="#2a9080"/>
<polygon points="569.0,312.0 578.4,317.4 585.1,302.6 590.5,348.3 581.1,348.3 574.4,333.5" fill="#2a8a72"/><polygon points="593.2,242.9 599.9,269.1 609.3,291.9 617.3,312.0 625.4,286.5 630.1,259.7 644.2,267.1 652.2,313.4 658.9,330.8 653.6,348.3 585.1,348.3 581.1,326.8 585.1,300.0" fill="url(#g3)"/>
<polygon points="691.2,249.0 701.9,253.0 711.3,265.1 715.3,259.7 726.1,253.0 731.4,265.1 727.4,289.2 723.4,326.8 716.7,348.3 660.3,348.3 669.7,317.4 681.8,324.1 679.1,269.1" fill="url(#g3)"/>
<polygon points="644.2,243.6 648.9,281.2 652.2,316.1 645.5,348.3 640.1,348.3 642.2,300.0" fill="#5ec04a" opacity="0.7"/><polygon points="714.0,338.9 723.4,326.8 727.4,348.3 711.3,348.3" fill="#3a6a98" opacity="0.8"/>
<defs><linearGradient id="gy" gradientUnits="userSpaceOnUse" x1="0" y1="259" x2="0" y2="291"><stop offset="0" stop-color="#e4e020"/><stop offset="1" stop-color="#84c838" stop-opacity="0"/></linearGradient></defs><polygon points="630.1,259.7 644.2,267.1 644.8,281.2 638.8,289.2 629.4,275.8" fill="url(#gy)"/><polygon points="630.1,259.7 644.2,267.1 643.8,271.1 629.4,264.0" fill="#e4dc18"/>
<polygon points="715.3,259.7 726.1,253.0 731.4,265.1 729.4,281.2 720.7,270.4 712.6,265.1" fill="#b8c424" opacity="0.9"/>
<polygon points="611.3,220.1 617.3,230.2 606.6,236.9" fill="#a8c030" opacity="0.8"/>
<g font-family="Liberation Sans" font-size="11" fill="#e8e8e8">
<text x="495" y="277">8</text><text x="504" y="308">6</text><text x="512" y="336">4</text>
<text transform="translate(465,329) rotate(63)" font-size="14" letter-spacing="0.5">title</text>
</g>
</svg>
</div>
<div id="footer" class="a">
  <div class="a" id="fs" style="left:88px;top:16px;font-size:12.5px;line-height:14px;font-weight:bold;color:#a3c9fd;white-space:nowrap;transform-origin:0 50%;transform:scaleX(0.906)">SHOW 4 PIPELINE RUNS SELECTED</div>
  <div class="btn" style="left:317px;top:5px;width:123px;height:36px;border:1px solid #8a8d93"></div>
  <svg class="a" style="left:334px;top:16px" width="16" height="16" viewBox="0 0 16 16"><circle cx="3" cy="2.5" r="2" fill="#a3c9fd"/><circle cx="12.5" cy="13" r="2" fill="#a3c9fd"/><path d="M3 3 V10 L6 13.5M12.5 12.5 V5.5 L9.5 2" fill="none" stroke="#a3c9fd" stroke-width="1.5"/><path d="M4 11.5 L6.5 13.8 L4 15M8.5 0.8 L9.5 2.2 L11.5 1" fill="none" stroke="#a3c9fd" stroke-width="1.3"/></svg>
  <div class="a" id="fc" style="left:358px;top:16px;font-size:12.5px;line-height:14px;font-weight:bold;color:#a3c9fd;white-space:nowrap;transform-origin:0 50%;transform:scaleX(0.905)">COMPARE</div>
  <div class="a" style="left:458px;top:13px;width:1px;height:20px;background:#4a6a9a"></div>
  <svg class="a" style="left:486px;top:15px" width="18" height="18" viewBox="0 0 18 18"><rect x="0.5" y="0.5" width="17" height="4.5" rx="1.2" fill="#a3c9fd"/><path d="M1.5 6 H16.5 V15.5 A1.5 1.5 0 0 1 15 17 H3 A1.5 1.5 0 0 1 1.5 15.5 Z" fill="#a3c9fd"/><rect x="6" y="8" width="6" height="1.6" fill="#1b1c1f"/></svg>
  <div class="a" style="left:542px;top:18px;width:13px;height:12px;background:#6b6c70;border-radius:1.5px"></div>
  <div class="a" style="left:585px;top:13px;width:1px;height:20px;background:#4a6a9a"></div>
  <svg class="a" style="left:612px;top:17px" width="19" height="13" viewBox="0 0 19 13"><path d="M0.5 2 A1.5 1.5 0 0 1 2 0.5 H13 L18.5 6.5 L13 12.5 H2 A1.5 1.5 0 0 1 0.5 11 Z" fill="#a3c9fd"/><circle cx="13.5" cy="6.5" r="1.4" fill="#1b1c1f"/></svg>
</div>
</body></html>
